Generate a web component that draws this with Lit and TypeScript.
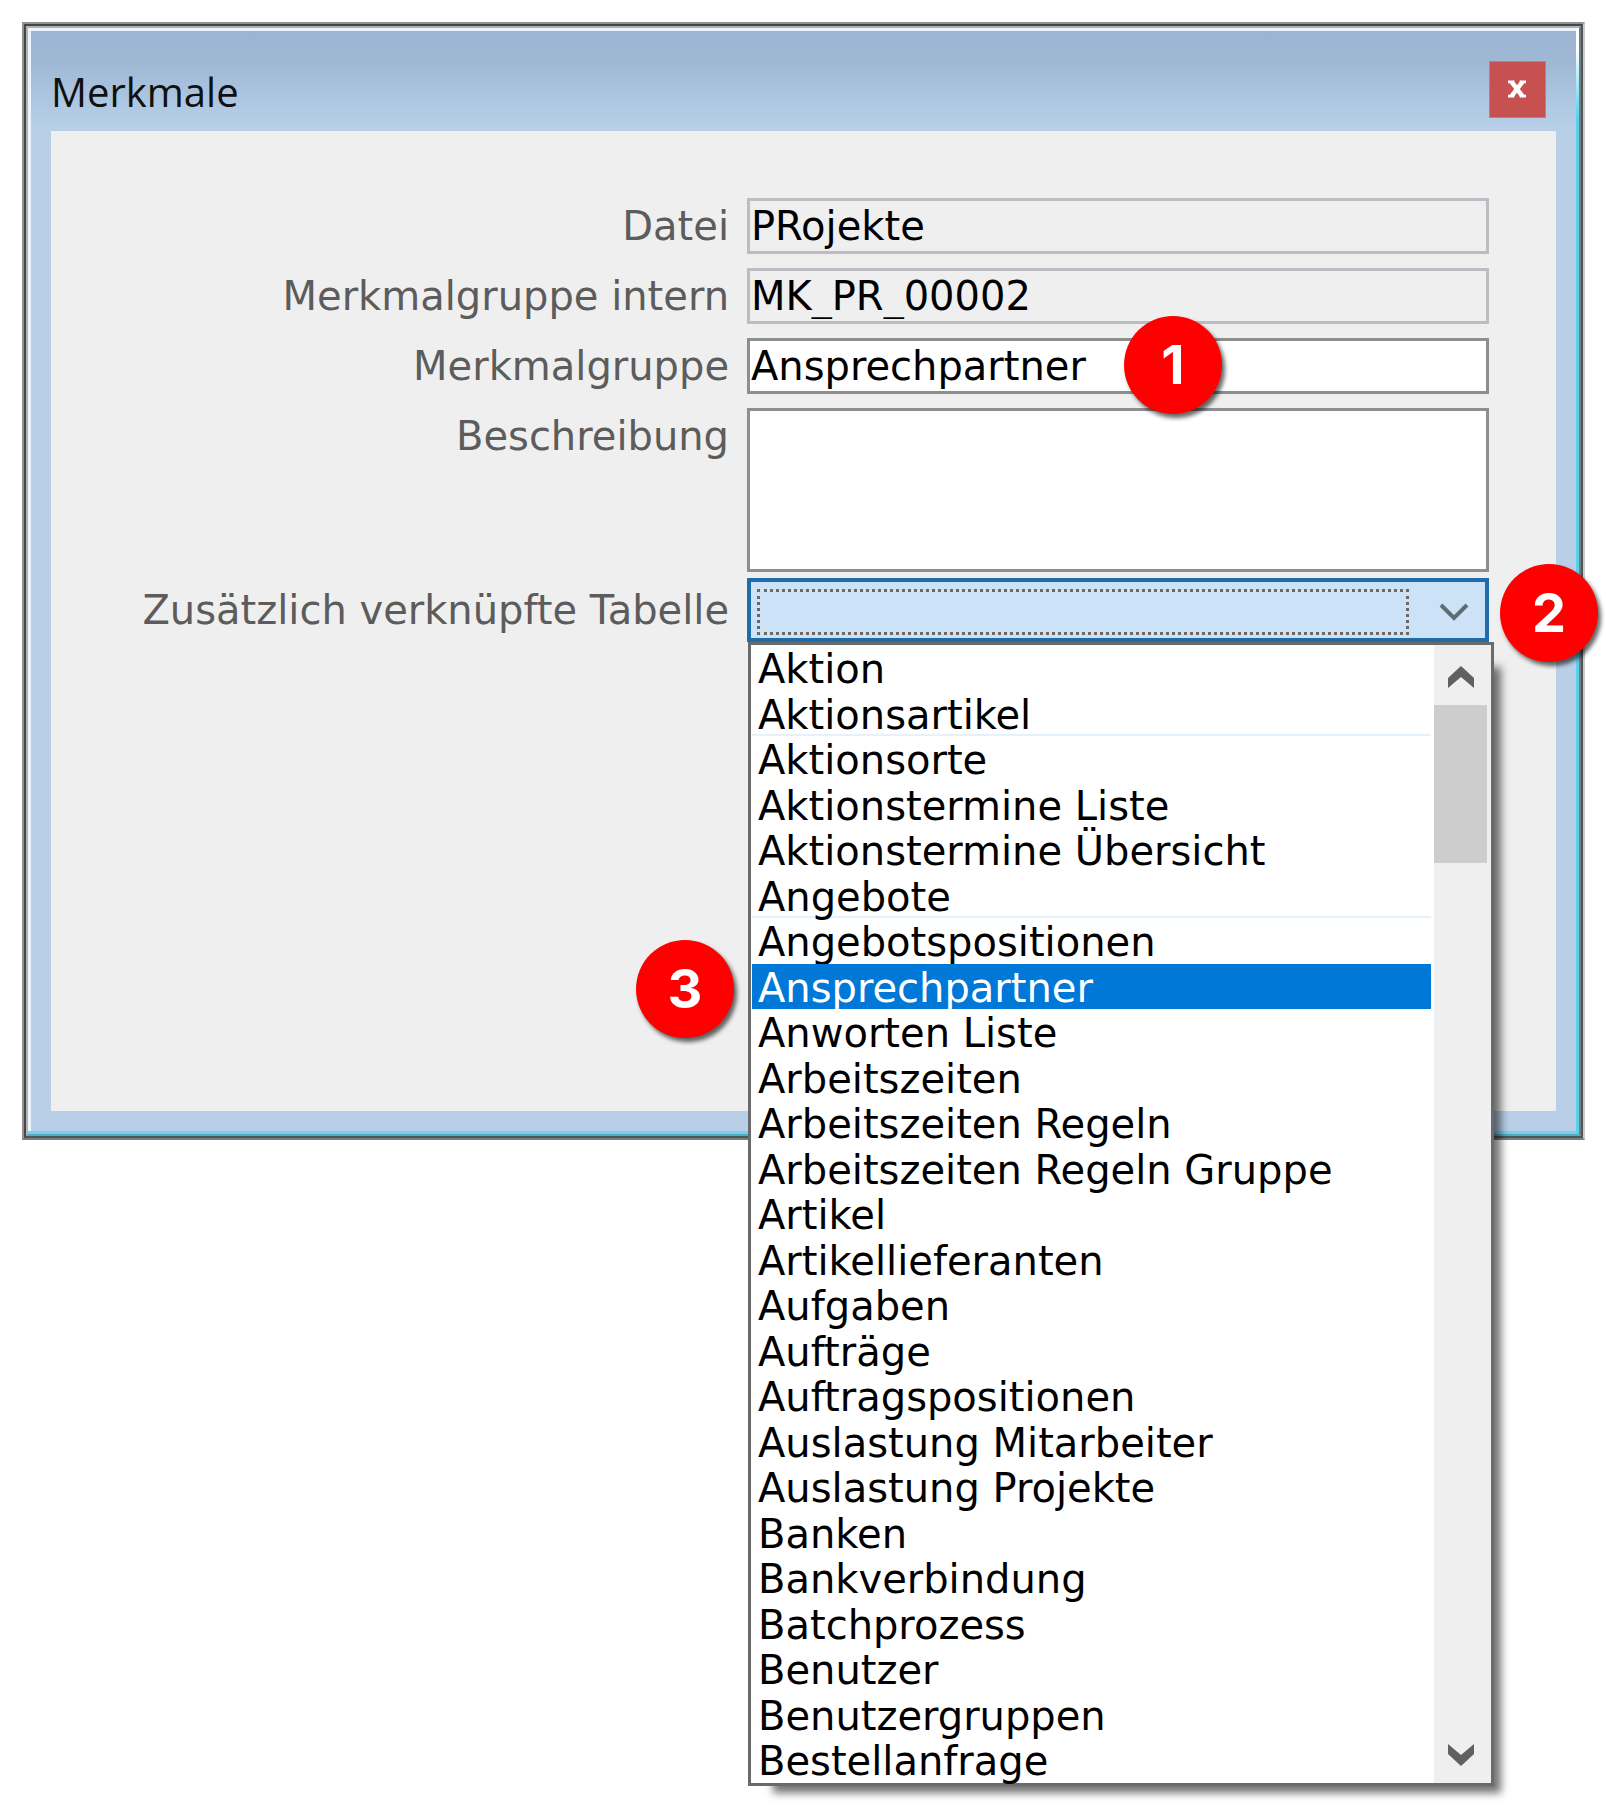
import { LitElement, html, css, svg } from "lit";
import { customElement, property, state } from "lit/decorators.js";
import { classMap } from "lit/directives/class-map.js";

const TABLES = [
  "Aktion",
  "Aktionsartikel",
  "Aktionsorte",
  "Aktionstermine Liste",
  "Aktionstermine Übersicht",
  "Angebote",
  "Angebotspositionen",
  "Ansprechpartner",
  "Anworten Liste",
  "Arbeitszeiten",
  "Arbeitszeiten Regeln",
  "Arbeitszeiten Regeln Gruppe",
  "Artikel",
  "Artikellieferanten",
  "Aufgaben",
  "Aufträge",
  "Auftragspositionen",
  "Auslastung Mitarbeiter",
  "Auslastung Projekte",
  "Banken",
  "Bankverbindung",
  "Batchprozess",
  "Benutzer",
  "Benutzergruppen",
  "Bestellanfrage",
];

/* Entries followed by a thin separator line. */
const SEPARATED = new Set(["Aktionsartikel", "Angebote"]);

/* Numbered red callout. */
@customElement("step-badge")
export class StepBadge extends LitElement {
  @property({ type: Number }) step = 1;

  static styles = css`
    :host {
      display: flex;
      align-items: center;
      justify-content: center;
      width: 98px;
      height: 98px;
      border-radius: 50%;
      background: #ff0000;
      color: #ffffff;
      font: 700 54px/98px Inter, "Liberation Sans", sans-serif;
      box-shadow: 3px 4px 4px rgba(0, 0, 0, 0.6);
    }
  `;

  render() {
    return html`${this.step}`;
  }
}

/* Open list of the combo box, with its scroll bar. */
@customElement("table-list")
export class TableList extends LitElement {
  @state() private selected = "Ansprechpartner";

  static styles = css`
    :host {
      display: flex;
      box-sizing: border-box;
      height: 1144px;
      border: 3px solid #6a6a6a;
      background: #ffffff;
      box-shadow: 16px 16px 8px -9px rgba(0, 0, 0, 0.55);
    }
    .options {
      flex: 1;
      display: grid;
      grid-auto-rows: minmax(0, 1fr);
      min-width: 0;
      margin: 0 3px 0 1px;
      padding: 0;
      list-style: none;
    }
    .option {
      padding-left: 6px;
      line-height: 48px;
      white-space: nowrap;
      color: #000000;
      box-sizing: border-box;
      cursor: default;
    }
    .separated {
      border-bottom: 2px solid #e5f1fb;
    }
    .selected {
      background: #0078d7;
      color: #ffffff;
    }
    .scrollbar {
      display: flex;
      flex-direction: column;
      width: 57px;
      padding-right: 4px;
      box-sizing: border-box;
      background: #efefef;
    }
    .arrow {
      display: flex;
      align-items: center;
      justify-content: center;
      height: 60px;
      margin: 0;
      padding: 4px 0 0;
      border: 0;
      background: transparent;
    }
    .arrow svg {
      width: 26px;
      height: 22px;
    }
    .track {
      flex: 1;
    }
    .thumb {
      height: 158px;
      background: #cdcdcd;
    }
  `;

  render() {
    return html`
      <ul class="options" role="listbox" aria-label="Tabellen">
        ${TABLES.map(
          (name) => html`<li
            role="option"
            aria-selected=${name === this.selected ? "true" : "false"}
            class=${classMap({
              option: true,
              separated: SEPARATED.has(name),
              selected: name === this.selected,
            })}
            @click=${() => (this.selected = name)}
          >${name}</li>`
        )}
      </ul>
      <div class="scrollbar">
        <button class="arrow" type="button" aria-label="Nach oben">
          <svg viewBox="0 0 26 22">${svg`<path d="M0 12 L13 0 L26 12 V22 L13 11 L0 22 Z" fill="#606060"/>`}</svg>
        </button>
        <div class="track"><div class="thumb"></div></div>
        <button class="arrow" type="button" aria-label="Nach unten">
          <svg viewBox="0 0 26 22">${svg`<path d="M0 10 L13 22 L26 10 V0 L13 11 L0 0 Z" fill="#606060"/>`}</svg>
        </button>
      </div>
    `;
  }
}

@customElement("app-root")
export class AppRoot extends LitElement {
  static styles = css`
    :host {
      display: block;
      box-sizing: border-box;
      min-height: 100vh;
      padding: 22px 21px 0 22px;
      background: #ffffff;
      font: 40px/56px "DejaVu Sans", sans-serif;
    }
    .window {
      border: 2px solid #929292;
      border-right-color: #cccccc;
      border-bottom-color: #7c7c7c;
    }
    .edge {
      border: 2px solid #464646;
      border-right-color: #555555;
      border-bottom-color: #455a5f;
    }
    .bevel {
      border: 2px solid #b2b2b2;
      border-right-color: #6b8085;
      border-bottom-color: #52adc2;
    }
    .frame {
      padding: 3px;
      background:
        linear-gradient(#9ab4d2, #9fb9d5 32px, #b2cce6 84px, #b9cfe8 98px) center / calc(100% - 6px) calc(100% - 6px) no-repeat,
        linear-gradient(#ffffff 20px, #5dd0ec 90px) right / 3px 100% no-repeat,
        linear-gradient(#78d0ee, #78d0ee) bottom / 100% 3px no-repeat,
        #eef4fb;
    }
    .titlebar {
      display: flex;
      align-items: flex-start;
      justify-content: space-between;
      height: 100px;
      padding: 0 30px 0 20px;
      box-sizing: border-box;
    }
    .title {
      margin: 0;
      padding-top: 33px;
      font: 400 40px/56px "Open Sans", "Noto Sans", sans-serif;
      color: #101010;
    }
    .close {
      display: flex;
      align-items: center;
      justify-content: center;
      width: 57px;
      height: 57px;
      margin: 30px 0 0;
      padding: 0 2px 2px 0;
      border: 1px solid #c77880;
      background: #c75050;
    }
    .close svg {
      width: 18px;
      height: 18px;
    }
    .panel {
      display: flex;
      flex-direction: column;
      gap: 14px;
      box-sizing: border-box;
      min-height: 980px;
      margin: 0 20px 20px 20px;
      padding: 67px 67px 0 0;
      background: #efefef;
    }
    .row {
      display: grid;
      grid-template-columns: 678fr 742fr;
      column-gap: 18px;
    }
    .row.tall {
      margin-bottom: -8px;
    }
    .label {
      text-align: right;
      white-space: nowrap;
      color: #5c5c5c;
    }
    .combo-label {
      line-height: 64px;
    }
    .field {
      position: relative;
      display: flex;
      min-width: 0;
    }
    .input,
    .area {
      width: 100%;
      min-width: 0;
      margin: 0;
      box-sizing: border-box;
      border: 3px solid #8e8e8e;
      border-radius: 0;
      background: #ffffff;
      color: #000000;
      font: inherit;
      outline: none;
    }
    .input {
      height: 56px;
      padding: 0 0 0 1px;
      line-height: 50px;
    }
    .input:read-only {
      border-color: #bcbdc2;
      background: #efefef;
    }
    .area {
      height: 164px;
      padding: 0;
      resize: none;
    }
    .combo {
      display: flex;
      align-items: center;
      flex: 1;
      height: 64px;
      padding: 6px 16px 2px 6px;
      box-sizing: border-box;
      border: 4px solid #1f6cab;
      background: #cce3f7;
    }
    .select {
      flex: 1;
      height: 46px;
      min-width: 0;
      margin: 0;
      border: 3px dotted #6f6660;
      border-radius: 0;
      background: transparent;
      appearance: none;
      font: inherit;
      outline: none;
    }
    .chevron {
      flex: none;
      width: 30px;
      height: 18px;
      margin-left: 30px;
    }
    .popup {
      position: absolute;
      z-index: 1;
      top: 100%;
      left: 1px;
      right: -5px;
    }
    .badge {
      position: absolute;
      z-index: 2;
    }
    .badge-name {
      left: 377px;
      top: -22px;
    }
    .badge-combo {
      right: -109px;
      top: -14px;
    }
    .badge-list {
      left: -111px;
      top: 362px;
    }
  `;

  render() {
    return html`
      <div class="window"><div class="edge"><div class="bevel"><div class="frame">
        <header class="titlebar">
          <h1 class="title">Merkmale</h1>
          <button class="close" type="button" aria-label="Schließen">
            <svg viewBox="0 0 20 20" fill="none" stroke="#ffffff">
              <path d="M4 2 L16 18 M16 2 L4 18" stroke-width="5" />
              <path d="M0 2 H7 M13 2 H20 M0 18 H7 M13 18 H20" stroke-width="3" />
            </svg>
          </button>
        </header>
        <form class="panel">
          <div class="row">
            <label class="label" for="file">Datei</label>
            <div class="field"><input class="input" id="file" readonly .value=${"PRojekte"} /></div>
          </div>
          <div class="row">
            <label class="label" for="internal">Merkmalgruppe intern</label>
            <div class="field"><input class="input" id="internal" readonly .value=${"MK_PR_00002"} /></div>
          </div>
          <div class="row">
            <label class="label" for="group">Merkmalgruppe</label>
            <div class="field">
              <input class="input" id="group" .value=${"Ansprechpartner"} />
              <step-badge class="badge badge-name" .step=${1}></step-badge>
            </div>
          </div>
          <div class="row tall">
            <label class="label" for="description">Beschreibung</label>
            <div class="field"><textarea class="area" id="description"></textarea></div>
          </div>
          <div class="row">
            <label class="label combo-label" for="table">Zusätzlich verknüpfte Tabelle</label>
            <div class="field">
              <div class="combo">
                <select class="select" id="table">
                  <option value=""></option>
                  ${TABLES.map((name) => html`<option>${name}</option>`)}
                </select>
                <svg class="chevron" viewBox="0 0 30 18" fill="none" stroke="#5f6b75" stroke-width="4">
                  <path d="M2 2 L15 15 L28 2" />
                </svg>
              </div>
              <table-list class="popup"></table-list>
              <step-badge class="badge badge-combo" .step=${2}></step-badge>
              <step-badge class="badge badge-list" .step=${3}></step-badge>
            </div>
          </div>
        </form>
      </div></div></div></div>
    `;
  }
}
